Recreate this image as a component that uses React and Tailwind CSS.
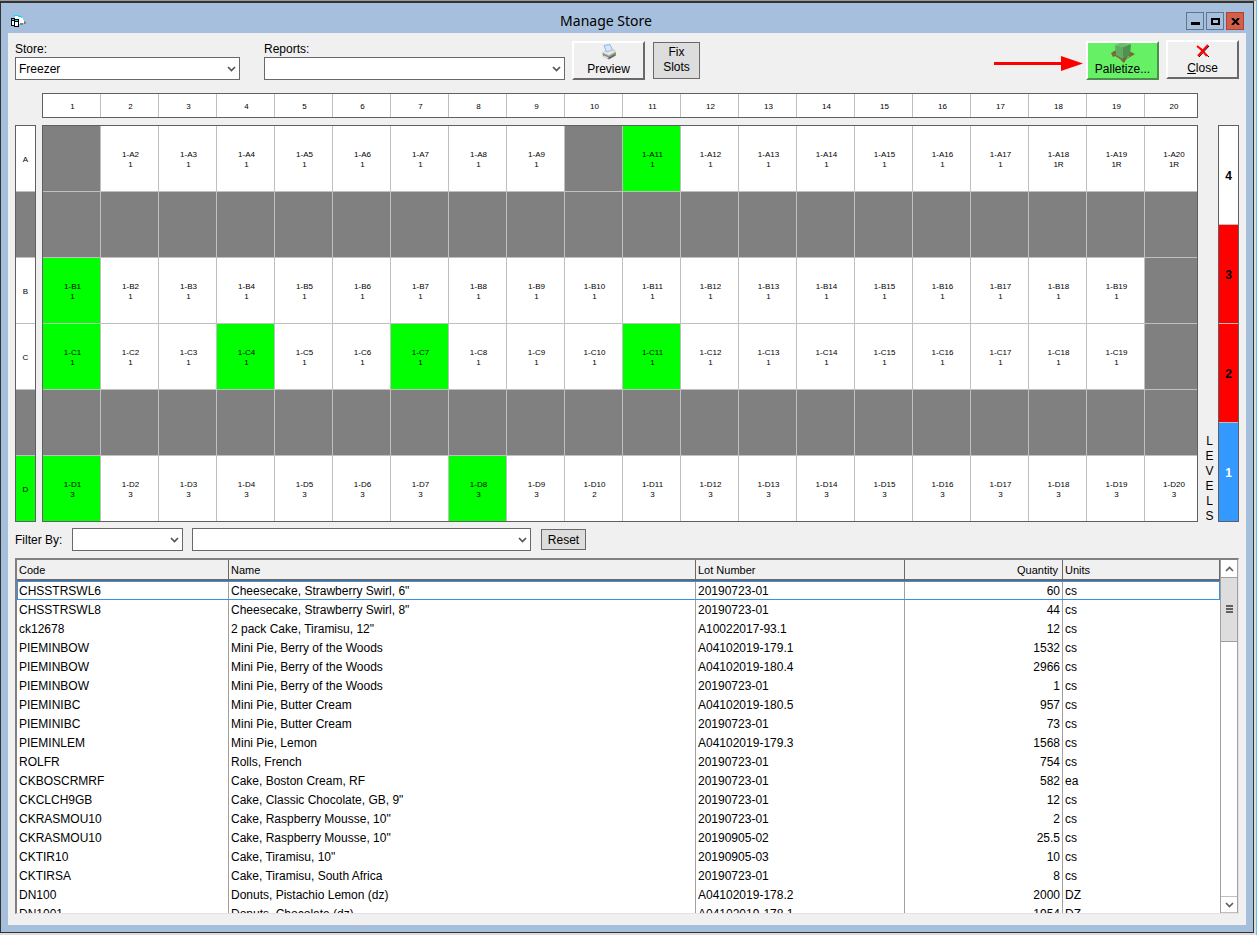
import clsx from 'clsx';

const COLUMNS = Array.from({ length: 20 }, (_, i) => i + 1);

// full: green slots, blocked: grey slots, notes: second line where it differs
const ROWS = [
  { name: 'A', full: [11], blocked: [1, 10], note: '1', notes: { 18: '1R', 19: '1R', 20: '1R' } },
  { name: '', aisle: true },
  { name: 'B', full: [1], blocked: [20], note: '1', notes: {} },
  { name: 'C', full: [1, 4, 7, 11], blocked: [20], note: '1', notes: {} },
  { name: '', aisle: true },
  { name: 'D', full: [1, 8], blocked: [], note: '3', notes: { 10: '2' }, active: true },
];

const LEVELS = [
  { level: 4, style: 'bg-white text-black' },
  { level: 3, style: 'bg-[#ff0000] text-black' },
  { level: 2, style: 'bg-[#ff0000] text-black' },
  { level: 1, style: 'bg-[#3399ff] text-white' },
];

const ITEMS = [
  ['CHSSTRSWL6', 'Cheesecake, Strawberry Swirl, 6"', '20190723-01', '60', 'cs'],
  ['CHSSTRSWL8', 'Cheesecake, Strawberry Swirl, 8"', '20190723-01', '44', 'cs'],
  ['ck12678', '2 pack Cake, Tiramisu, 12"', 'A10022017-93.1', '12', 'cs'],
  ['PIEMINBOW', 'Mini Pie, Berry of the Woods', 'A04102019-179.1', '1532', 'cs'],
  ['PIEMINBOW', 'Mini Pie, Berry of the Woods', 'A04102019-180.4', '2966', 'cs'],
  ['PIEMINBOW', 'Mini Pie, Berry of the Woods', '20190723-01', '1', 'cs'],
  ['PIEMINIBC', 'Mini Pie, Butter Cream', 'A04102019-180.5', '957', 'cs'],
  ['PIEMINIBC', 'Mini Pie, Butter Cream', '20190723-01', '73', 'cs'],
  ['PIEMINLEM', 'Mini Pie, Lemon', 'A04102019-179.3', '1568', 'cs'],
  ['ROLFR', 'Rolls, French', '20190723-01', '754', 'cs'],
  ['CKBOSCRMRF', 'Cake, Boston Cream, RF', '20190723-01', '582', 'ea'],
  ['CKCLCH9GB', 'Cake, Classic Chocolate, GB, 9"', '20190723-01', '12', 'cs'],
  ['CKRASMOU10', 'Cake, Raspberry Mousse, 10"', '20190723-01', '2', 'cs'],
  ['CKRASMOU10', 'Cake, Raspberry Mousse, 10"', '20190905-02', '25.5', 'cs'],
  ['CKTIR10', 'Cake, Tiramisu, 10"', '20190905-03', '10', 'cs'],
  ['CKTIRSA', 'Cake, Tiramisu, South Africa', '20190723-01', '8', 'cs'],
  ['DN100', 'Donuts, Pistachio Lemon (dz)', 'A04102019-178.2', '2000', 'DZ'],
  ['DN1001', 'Donuts, Chocolate (dz)', 'A04102019-178.1', '1954', 'DZ'],
];

const HEADINGS = ['Code', 'Name', 'Lot Number', 'Quantity', 'Units'];

const GRID = 'grid grid-cols-[repeat(19,minmax(0,58fr))_minmax(0,52fr)]';
const RAISED =
  'bg-[#f0f0f0] border-2 border-t-white border-l-white border-b-[#696969] border-r-[#696969]';

function AppIcon() {
  return (
    <svg width="16" height="14" viewBox="0 0 16 14" shapeRendering="crispEdges">
      <path d="M5 2h6v2h2v2h1v3h-3v1H7V5H5z" fill="#fff" />
      <path d="M4 1h5v1h3v1H8V2H4z" fill="#00e5ff" />
      <path d="M14 7h1v1h1v2h-2zM10 9h3v2h-3z" fill="#808080" />
      <path d="M1 4h4v1h4v8H4v-1H1z" fill="#000" />
      <path d="M2 5h2v1H2zM5 6h3v1H5z" fill="#00e5ff" />
      <path d="M2 7h2v4H2zM5 8h3v4H5z" fill="#fff" />
    </svg>
  );
}

function PrinterIcon() {
  return (
    <svg width="16" height="16" viewBox="0 0 16 16">
      <path d="M3 1.500l6-1 2.500 5.500-6 2z" fill="#d5e6fb" stroke="#8fb4e3" />
      <path d="M1.500 8.500l3-2 1 1.500 6-2-.5-1.500 3 1.500 1 5-7 4.500-6-3z" fill="#c4c6c4" />
      <path d="M1.500 9l6.500 3 7-4v3.500l-7 4-6-3.500z" fill="#8b8d8b" />
      <path d="M2 8.500l6 2.500 6-3.500-1.500-1-6 2-2-1z" fill="#e8eae8" />
      <path d="M3 11.500l4 2v1l-4-2z" fill="#f4f4f4" />
      <path d="M8 13.500l6-3v1l-6 3.500z" fill="#5d5f5d" />
      <path d="M12 9.500h2" stroke="#6fd02c" />
    </svg>
  );
}

function PalletIcon() {
  return (
    <svg width="26" height="21" viewBox="0 0 26 21">
      <path d="M1 10l5-3 13 1 6 3-5 3-2-1-4 7-4-4-5-3-2 1z" fill="#70663a" />
      <path d="M2 10l9 6 2 3M24 11l-8 5" stroke="#96713e" fill="none" />
      <path d="M5 2l8 2v12l-7-4z" fill="#62ab62" />
      <path d="M13 4l8-3-1 11-7 4z" fill="#4f9250" />
      <path d="M5 2l6-2 10 1-8 3z" fill="#6fba70" />
    </svg>
  );
}

function CloseIcon() {
  return (
    <svg width="16" height="14" viewBox="0 0 16 14">
      <path d="M3 3l11 10M14 2L4 13" stroke="#000" strokeWidth="1" />
      <path d="M2 2l5 4M6 5l6 7M13 1L3 12" stroke="#f00" strokeWidth="2" />
    </svg>
  );
}

function Chevron({ up = false, className }) {
  return (
    <svg width="9" height="6" viewBox="0 0 9 6" className={className} aria-hidden="true">
      <path d={up ? 'M1 5l3.5-3.5L8 5' : 'M1 1l3.5 3.5L8 1'} fill="none" stroke="currentColor" strokeWidth="1.7" />
    </svg>
  );
}

function Dropdown({ id, label, value = '', className }) {
  return (
    <div className={clsx('relative', className)}>
      <select
        id={id}
        aria-label={label}
        defaultValue={value}
        className="block h-[23px] w-full appearance-none border border-[#696969] bg-white pl-[3px] outline-none"
      >
        <option value={value}>{value}</option>
      </select>
      <Chevron className="pointer-events-none absolute top-[9px] right-1 text-[#555]" />
    </div>
  );
}

function TitleBar() {
  const button = 'flex h-[18px] w-[18px] items-center justify-center border';
  return (
    <header className="flex h-[30px] shrink-0 items-center pt-[6px] pr-[2px] pl-[2px] text-black">
      <AppIcon />
      <h1 className="flex-1 text-center font-['Noto_Sans'] text-[14px] leading-5">Manage Store</h1>
      <div className="flex gap-[2px]">
        <button aria-label="Minimize" className={clsx(button, 'border-[#5f7590]')}>
          <span className="mt-1 h-[3px] w-[9px] bg-black" />
        </button>
        <button aria-label="Maximize" className={clsx(button, 'border-[#5f7590]')}>
          <span className="h-[7px] w-[9px] border-2 border-black" />
        </button>
        <button aria-label="Close window" className={clsx(button, 'border-[#b0412f] bg-[#d0604c]')}>
          <svg width="9" height="7" viewBox="0 0 9 7">
            <path d="M1 0l7 7M8 0L1 7" stroke="#000" strokeWidth="2" />
          </svg>
        </button>
      </div>
    </header>
  );
}

function Toolbar() {
  return (
    <div className="flex items-start">
      <div className="mt-[9px] w-[225px]">
        <label htmlFor="store" className="block leading-[15px]">Store:</label>
        <Dropdown id="store" value="Freezer" />
      </div>
      <div className="mt-[9px] ml-6 w-[301px]">
        <label htmlFor="reports" className="block leading-[15px]">Reports:</label>
        <Dropdown id="reports" />
      </div>
      <button className={clsx(RAISED, 'mt-2 ml-[7px] flex h-[39px] w-[73px] flex-col items-center justify-between pt-[1px] pb-[1px]')}>
        <PrinterIcon />
        <span className="leading-4">Preview</span>
      </button>
      <button className="mt-[9px] ml-2 h-[37px] w-[47px] border border-[#696969] bg-[#dddddd] px-1 pb-[2px] leading-[15px]">
        Fix Slots
      </button>
      <svg width="92" height="16" viewBox="0 0 92 16" className="mt-[23px] ml-auto">
        <path d="M1 7.500h70" stroke="#f00" strokeWidth="3" />
        <path d="M68 0l22 7.500-22 7.500z" fill="#f00" />
      </svg>
      <button className="mt-2 ml-[1px] flex h-[39px] w-[73px] flex-col items-center justify-between border-2 border-t-white border-l-white border-r-[#4c8f4c] border-b-[#4c8f4c] bg-[#66f066] pb-[1px]">
        <PalletIcon />
        <span className="-mt-1 leading-4">Palletize...</span>
      </button>
      <button className={clsx(RAISED, 'mt-[7px] ml-[7px] flex h-[39px] w-[73px] flex-col items-center justify-between pt-[2px] pb-[1px]')}>
        <CloseIcon />
        <span className="leading-4"><u>C</u>lose</span>
      </button>
    </div>
  );
}

function Slot({ row, column, lastRow }) {
  const blocked = row.aisle || row.blocked.includes(column);
  const full = !row.aisle && row.full.includes(column);
  return (
    <div
      className={clsx(
        'flex flex-col justify-center border-[#c0c0c0] pt-[2px] text-center',
        column < 20 ? 'border-r pl-[2px]' : 'pl-[6px]',
        lastRow ? 'h-[65px]' : 'h-[66px] border-b',
        blocked ? 'bg-[#808080]' : full ? 'bg-[#00ff00]' : 'bg-white'
      )}
    >
      {!blocked && (
        <>
          <span>1-{row.name}{column}</span>
          <span>{row.notes[column] || row.note}</span>
        </>
      )}
    </div>
  );
}

function StoreMap() {
  return (
    <section className="mt-[13px] text-[8px] leading-[10px]">
      <div className={clsx(GRID, 'mr-[41px] ml-[27px] h-[25px] border border-[#606060] bg-white')}>
        {COLUMNS.map((c) => (
          <div
            key={c}
            className={clsx(
              'flex items-center justify-center pt-[2px]',
              c < 20 ? 'border-r border-[#c0c0c0] pl-[2px]' : 'pl-[6px]'
            )}
          >
            {c}
          </div>
        ))}
      </div>

      <div className="mt-[7px] flex">
        <div className="w-[21px] border border-[#606060]">
          {ROWS.map((row, i) => (
            <div
              key={i}
              className={clsx(
                'flex items-center justify-center border-[#c0c0c0] pt-[2px]',
                i === ROWS.length - 1 ? 'h-[65px]' : 'h-[66px] border-b',
                row.aisle ? 'bg-[#808080]' : row.active ? 'bg-[#00ff00]' : 'bg-white'
              )}
            >
              {row.name}
            </div>
          ))}
        </div>

        <div className="ml-[6px] flex-1 border border-[#606060]">
          {ROWS.map((row, i) => (
            <div key={i} className={GRID}>
              {COLUMNS.map((c) => (
                <Slot key={c} row={row} column={c} lastRow={i === ROWS.length - 1} />
              ))}
            </div>
          ))}
        </div>

        <div className="flex w-5 flex-col items-center justify-end pl-[3px] text-[12px] leading-[15px]">
          {'LEVELS'.split('').map((letter, i) => (
            <span key={i} className="translate-y-[2px]">{letter}</span>
          ))}
        </div>

        <div className="flex w-[21px] flex-col border border-[#606060] text-[12px] font-bold">
          {LEVELS.map(({ level, style }) => (
            <button
              key={level}
              className={clsx('flex-1 border-b border-[#c0c0c0] pt-[2px] last:border-b-0', style)}
            >
              {level}
            </button>
          ))}
        </div>
      </div>
    </section>
  );
}

function Filters() {
  return (
    <div className="mt-[6px] flex items-center">
      <label htmlFor="filter-field" className="w-[57px]">Filter By:</label>
      <Dropdown id="filter-field" className="w-[111px]" />
      <Dropdown id="filter-value" label="Filter value" className="ml-[9px] w-[339px]" />
      <button className="ml-[10px] h-[21px] w-[45px] border border-[#696969] bg-[#dddddd]">Reset</button>
    </div>
  );
}

function Scrollbar() {
  return (
    <div className="flex w-[18px] shrink-0 flex-col border-r border-l border-[#a0a0a0] bg-white text-[#606060]">
      <button aria-label="Scroll up" className="flex h-[17px] items-center justify-center">
        <Chevron up />
      </button>
      <div className="flex h-[65px] flex-col items-center justify-center gap-[1px] border-y border-[#a0a0a0] bg-[#dddddd] pb-[1px]">
        <span className="h-[2px] w-[7px] bg-[#606060]" />
        <span className="h-[2px] w-[7px] bg-[#606060]" />
        <span className="h-[2px] w-[7px] bg-[#606060]" />
      </div>
      <button
        aria-label="Scroll down"
        className="mt-auto flex h-[17px] items-center justify-center border-y border-[#c0c0c0]"
      >
        <Chevron />
      </button>
    </div>
  );
}

function ItemTable() {
  return (
    <div className="mt-[7px] flex min-h-0 flex-1 border-t-2 border-r border-b border-l-2 border-t-[#808080] border-r-[#e3e3e3] border-b-[#e3e3e3] border-l-[#808080] bg-white">
      <div className="min-w-0 flex-1 overflow-hidden">
        <table className="w-full table-fixed border-separate border-spacing-0">
          <colgroup>
            <col className="w-[212px]" />
            <col />
            <col className="w-[209px]" />
            <col className="w-[158px]" />
            <col className="w-[157px]" />
          </colgroup>
          <thead>
            <tr className="h-[21px] bg-[#f0f0f0] text-[11px]">
              {HEADINGS.map((h) => (
                <th
                  key={h}
                  className={clsx(
                    'border-r border-b-2 border-[#696969] pt-[2px] font-normal',
                    h === 'Quantity' ? 'pr-1 text-right' : 'pl-[2px] text-left'
                  )}
                >
                  {h}
                </th>
              ))}
            </tr>
          </thead>
          <tbody>
            {ITEMS.map((item, r) => (
              <tr
                key={r}
                className="h-[19px] leading-[17px] first:outline first:-outline-offset-1 first:outline-[#3a8ee6]"
              >
                {item.map((value, c) => (
                  <td
                    key={c}
                    className={clsx(
                      'px-[2px] pt-[2px] whitespace-nowrap',
                      c < 4 && 'border-r border-[#a0a0a0]',
                      c === 3 && 'text-right'
                    )}
                  >
                    {value}
                  </td>
                ))}
              </tr>
            ))}
          </tbody>
        </table>
      </div>
      <Scrollbar />
    </div>
  );
}

export default function App() {
  return (
    <div className="flex h-screen min-h-[640px] flex-col border-t border-r border-t-[#999] border-r-[#5bc8f0] bg-[#dcdcdc] pr-[2px] pb-[2px] font-['Liberation_Sans',Arial,sans-serif] text-[12px] text-black">
      <div className="flex min-h-0 flex-1 flex-col border-t-2 border-r border-b border-l border-[#333] bg-[#a6bfdc] pr-[7px] pb-[7px] pl-[7px]">
        <TitleBar />
        <main className="flex min-h-0 flex-1 flex-col bg-[#f0f0f0] px-[7px] pb-[11px]">
          <Toolbar />
          <StoreMap />
          <Filters />
          <ItemTable />
        </main>
      </div>
    </div>
  );
}
